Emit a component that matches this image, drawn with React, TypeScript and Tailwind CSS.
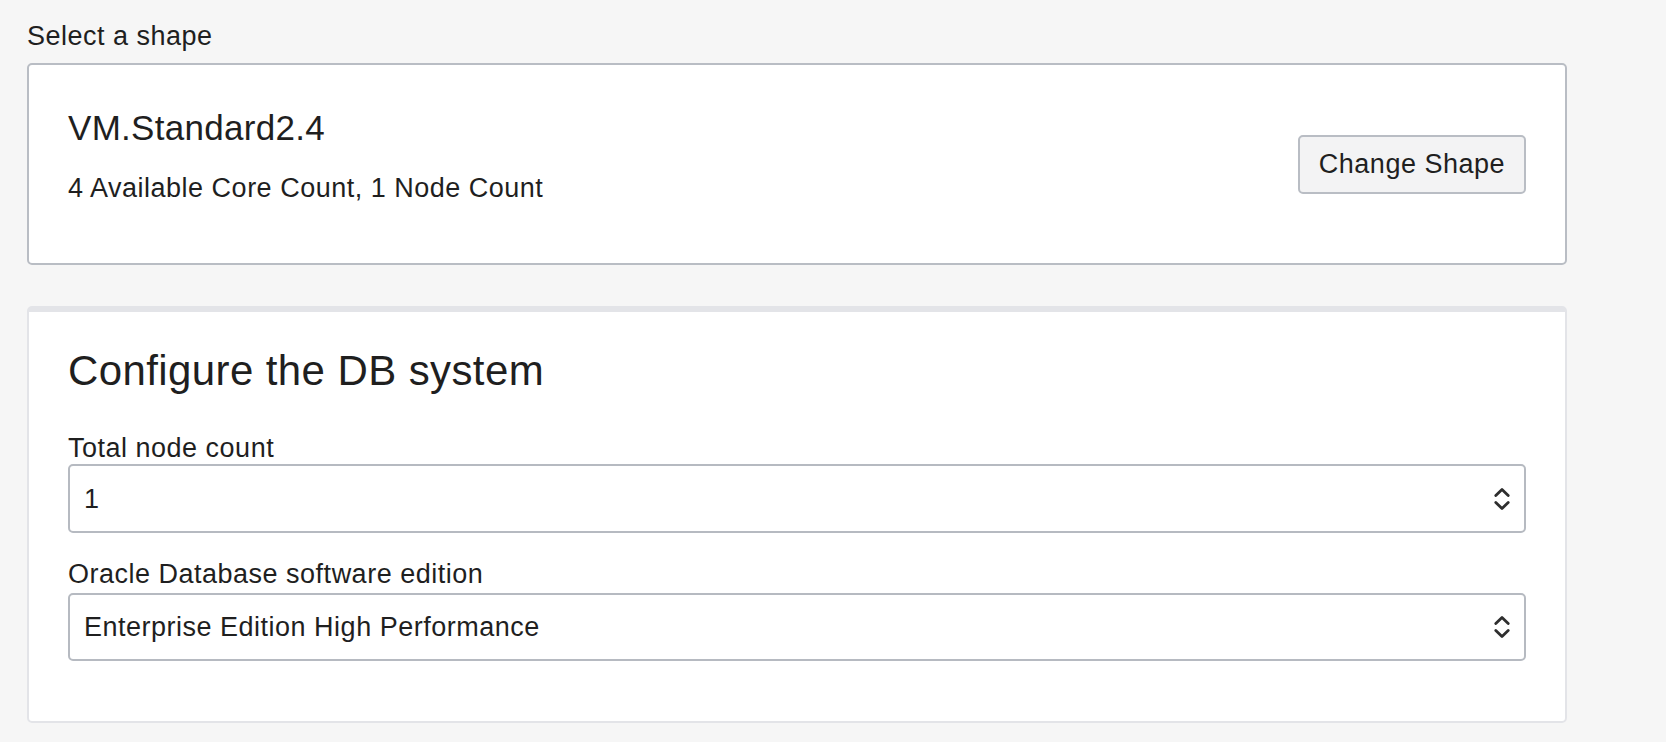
import React from "react"

function Chevrons() {
  return (
    <svg width="16" height="24" viewBox="0 0 16 24" fill="none" aria-hidden="true">
      <path d="M1.8 8.6 L8 2.6 L14.2 8.6" stroke="#2e2e2e" strokeWidth="2.8" strokeLinecap="round" strokeLinejoin="round" />
      <path d="M1.8 15.4 L8 21.4 L14.2 15.4" stroke="#2e2e2e" strokeWidth="2.8" strokeLinecap="round" strokeLinejoin="round" />
    </svg>
  )
}

export default function App() {
  return (
    <div className="min-h-[742px] bg-[#f6f6f6] pl-[27px] pr-[99px] pt-[18px] font-['Liberation_Sans',Arial,sans-serif] text-[#1f1f1f]">
      <div className="text-[27px] leading-[36px] tracking-[0.5px]">Select a shape</div>

      {/* selected shape */}
      <div className="mt-[9px] flex items-center justify-between bg-white border-2 border-[#b9bdc4] rounded-[5px] px-[39px]">
        <div className="pt-[42px] pb-[57px]">
          <div className="text-[35px] leading-[42px] tracking-[0.3px]">VM.Standard2.4</div>
          <div className="mt-[21px] text-[27px] leading-[36px] tracking-[0.5px]">4 Available Core Count, 1 Node Count</div>
        </div>
        <button
          type="button"
          className="h-[59px] px-[19px] bg-[#f3f3f4] border-2 border-[#b9bdc4] rounded-[5px] text-[27px] leading-[30px] tracking-[0.5px] text-[#1f1f1f]"
        >
          Change Shape
        </button>
      </div>

      {/* configure */}
      <div className="mt-[41px] bg-white border-2 border-[#e3e4e8] border-t-[6px] rounded-[5px] px-[39px] pt-[34px] pb-[60px]">
        <h2 className="text-[42px] leading-[50px] tracking-[0.4px] font-normal">Configure the DB system</h2>

        <div className="mt-[37px]">
          <label className="block text-[27px] leading-[30px] tracking-[0.5px] mb-[1px]">Total node count</label>
          <div className="h-[69px] flex items-center justify-between border-2 border-[#b6bac1] rounded-[5px] pl-[14px] pr-[14px]">
            <span className="text-[27px] leading-[30px] tracking-[0.5px]">1</span>
            <Chevrons />
          </div>
        </div>

        <div className="mt-[26px]">
          <label className="block text-[27px] leading-[30px] tracking-[0.5px] mb-[4px]">Oracle Database software edition</label>
          <div className="h-[68px] flex items-center justify-between border-2 border-[#b6bac1] rounded-[5px] pl-[14px] pr-[14px]">
            <span className="text-[27px] leading-[30px] tracking-[0.5px]">Enterprise Edition High Performance</span>
            <Chevrons />
          </div>
        </div>
      </div>
    </div>
  )
}
